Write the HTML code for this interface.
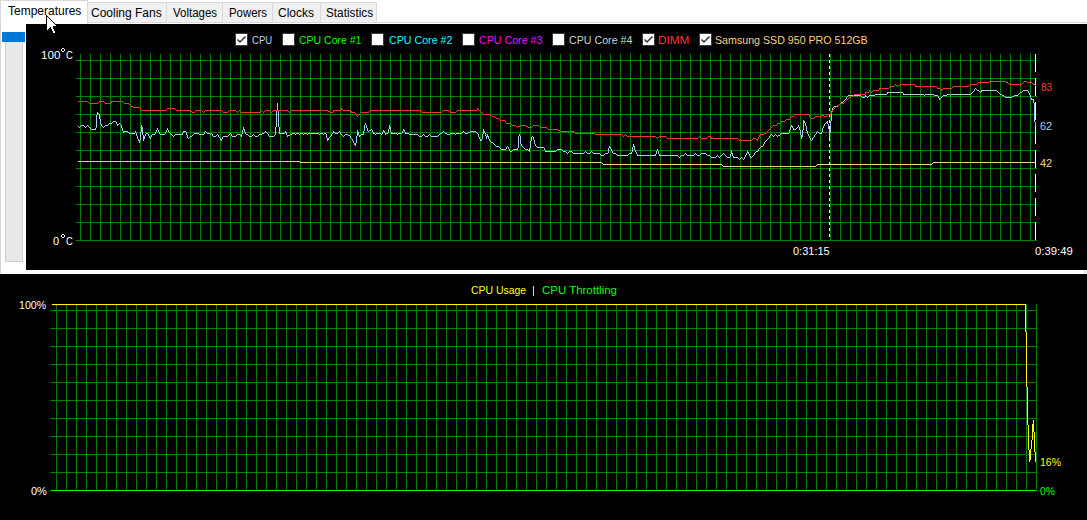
<!DOCTYPE html>
<html><head><meta charset="utf-8">
<style>
html,body{margin:0;padding:0;}
body{width:1087px;height:520px;position:relative;overflow:hidden;background:#fff;font-family:"Liberation Sans",sans-serif;}
.a{position:absolute;white-space:nowrap;line-height:1;}
.tab{position:absolute;top:2px;height:21px;background:#f0f0f0;border:1px solid #d9d9d9;box-sizing:border-box;}
.tt{position:absolute;font-size:12px;color:#000;white-space:nowrap;line-height:1;}
.lg{position:absolute;font-size:11px;white-space:nowrap;line-height:1;top:35px;}
.lab{position:absolute;font-size:11px;white-space:nowrap;line-height:1;color:#fff;}
svg{position:absolute;left:0;top:0;}
</style></head><body>
<div style="position:absolute;left:0;top:0;width:1px;height:274px;background:#d4d4d4"></div>
<div style="position:absolute;left:376px;top:22px;width:711px;height:1px;background:#d9d9d9"></div>
<div class="tab" style="left:87px;width:80px"></div>
<div class="tab" style="left:166px;width:57px"></div>
<div class="tab" style="left:222px;width:51px"></div>
<div class="tab" style="left:272px;width:49px"></div>
<div class="tab" style="left:320px;width:57px"></div>
<div style="position:absolute;left:0;top:0;width:88px;height:24px;background:#fff;border:1px solid #d9d9d9;border-bottom:none;box-sizing:border-box"></div>
<div class="a" style="left:8px;top:5px;font-size:12px;color:#000;">Temperatures</div>
<div class="a" style="left:91px;top:7px;font-size:12px;color:#000;">Cooling Fans</div>
<div class="a" style="left:173px;top:7px;font-size:12px;color:#000;transform:scaleX(0.957);transform-origin:0 0;">Voltages</div>
<div class="a" style="left:229px;top:7px;font-size:12px;color:#000;transform:scaleX(0.949);transform-origin:0 0;">Powers</div>
<div class="a" style="left:278px;top:7px;font-size:12px;color:#000;">Clocks</div>
<div class="a" style="left:326px;top:7px;font-size:12px;color:#000;transform:scaleX(0.979);transform-origin:0 0;">Statistics</div>
<div style="position:absolute;left:2px;top:32px;width:23px;height:10px;background:#0078d7"></div>
<div style="position:absolute;left:5px;top:42px;width:18px;height:220px;background:#e6e8e9;border:1px solid #cfcfcf;border-top:none;box-sizing:border-box"></div>
<div style="position:absolute;left:26px;top:24px;width:1061px;height:246px;background:#000"></div>
<div style="position:absolute;left:0;top:274px;width:1087px;height:246px;background:#000"></div>
<div style="position:absolute;left:1084px;top:270px;width:1px;height:4px;background:#d9d9d9"></div><div style="position:absolute;left:1085px;top:270px;width:2px;height:4px;background:#f0f0f0"></div><div style="position:absolute;left:1084px;top:23px;width:1px;height:1px;background:#d9d9d9"></div>
<svg width="1087" height="520" shape-rendering="crispEdges">
<path d="M80.5 54V241M90.5 54V241M100.5 54V241M110.5 54V241M120.5 54V241M130.5 54V241M140.5 54V241M150.5 54V241M160.5 54V241M170.5 54V241M180.5 54V241M190.5 54V241M200.5 54V241M210.5 54V241M220.5 54V241M230.5 54V241M240.5 54V241M250.5 54V241M260.5 54V241M270.5 54V241M280.5 54V241M290.5 54V241M300.5 54V241M310.5 54V241M320.5 54V241M330.5 54V241M340.5 54V241M350.5 54V241M360.5 54V241M370.5 54V241M380.5 54V241M390.5 54V241M400.5 54V241M410.5 54V241M420.5 54V241M430.5 54V241M440.5 54V241M450.5 54V241M460.5 54V241M470.5 54V241M480.5 54V241M490.5 54V241M500.5 54V241M510.5 54V241M520.5 54V241M530.5 54V241M540.5 54V241M550.5 54V241M560.5 54V241M570.5 54V241M580.5 54V241M590.5 54V241M600.5 54V241M610.5 54V241M620.5 54V241M630.5 54V241M640.5 54V241M650.5 54V241M660.5 54V241M670.5 54V241M680.5 54V241M690.5 54V241M700.5 54V241M710.5 54V241M720.5 54V241M730.5 54V241M740.5 54V241M750.5 54V241M760.5 54V241M770.5 54V241M780.5 54V241M790.5 54V241M800.5 54V241M810.5 54V241M820.5 54V241M830.5 54V241M840.5 54V241M850.5 54V241M860.5 54V241M870.5 54V241M880.5 54V241M890.5 54V241M900.5 54V241M910.5 54V241M920.5 54V241M930.5 54V241M940.5 54V241M950.5 54V241M960.5 54V241M970.5 54V241M980.5 54V241M990.5 54V241M1000.5 54V241M1010.5 54V241M1020.5 54V241M1030.5 54V241M76 60.5H1037M76 78.5H1037M76 96.5H1037M76 114.5H1037M76 132.5H1037M76 150.5H1037M76 168.5H1037M76 186.5H1037M76 204.5H1037M76 222.5H1037M76 240.5H1037" stroke="#008000" stroke-width="1" fill="none"/>
<path d="M56.5 304V491M66.5 304V491M76.5 304V491M86.5 304V491M96.5 304V491M106.5 304V491M116.5 304V491M126.5 304V491M136.5 304V491M146.5 304V491M156.5 304V491M166.5 304V491M176.5 304V491M186.5 304V491M196.5 304V491M206.5 304V491M216.5 304V491M226.5 304V491M236.5 304V491M246.5 304V491M256.5 304V491M266.5 304V491M276.5 304V491M286.5 304V491M296.5 304V491M306.5 304V491M316.5 304V491M326.5 304V491M336.5 304V491M346.5 304V491M356.5 304V491M366.5 304V491M376.5 304V491M386.5 304V491M396.5 304V491M406.5 304V491M416.5 304V491M426.5 304V491M436.5 304V491M446.5 304V491M456.5 304V491M466.5 304V491M476.5 304V491M486.5 304V491M496.5 304V491M506.5 304V491M516.5 304V491M526.5 304V491M536.5 304V491M546.5 304V491M556.5 304V491M566.5 304V491M576.5 304V491M586.5 304V491M596.5 304V491M606.5 304V491M616.5 304V491M626.5 304V491M636.5 304V491M646.5 304V491M656.5 304V491M666.5 304V491M676.5 304V491M686.5 304V491M696.5 304V491M706.5 304V491M716.5 304V491M726.5 304V491M736.5 304V491M746.5 304V491M756.5 304V491M766.5 304V491M776.5 304V491M786.5 304V491M796.5 304V491M806.5 304V491M816.5 304V491M826.5 304V491M836.5 304V491M846.5 304V491M856.5 304V491M866.5 304V491M876.5 304V491M886.5 304V491M896.5 304V491M906.5 304V491M916.5 304V491M926.5 304V491M936.5 304V491M946.5 304V491M956.5 304V491M966.5 304V491M976.5 304V491M986.5 304V491M996.5 304V491M1006.5 304V491M1016.5 304V491M1026.5 304V491M1036.5 304V491M50 310.5H1037M50 328.5H1037M50 346.5H1037M50 364.5H1037M50 382.5H1037M50 400.5H1037M50 418.5H1037M50 436.5H1037M50 454.5H1037M50 472.5H1037" stroke="#008000" stroke-width="1" fill="none"/>
<path d="M829.5 54V240" stroke="#fff" stroke-width="1" stroke-dasharray="3 3"/>
<path d="M1035.5 54V240" stroke="#fff" stroke-width="1" stroke-dasharray="18 6"/>
<path d="M78 161.5h222M300 162.5h302M933 162.5h102M602 163.5h1M932 163.5h1M603 164.5h119M817 164.5h115M722 165.5h1M816 165.5h1M723 166.5h93" stroke="#ffd080" fill="none"/>
<path d="M975 88.5h1M974 89.5h1M976 89.5h1M974 90.5h1M977 90.5h2M981 90.5h16M1023 90.5h5M973 91.5h1M979 91.5h1M981 91.5h1M997 91.5h1M1022 91.5h1M1028 91.5h1M887 92.5h16M972 92.5h1M980 92.5h1M998 92.5h1M1020 92.5h2M1028 92.5h1M887 93.5h1M903 93.5h1M971 93.5h1M999 93.5h1M1019 93.5h1M1029 93.5h1M875 94.5h12M903 94.5h21M925 94.5h9M947 94.5h3M951 94.5h20M1000 94.5h2M1018 94.5h1M1029 94.5h1M848 95.5h13M865 95.5h1M869 95.5h6M924 95.5h1M934 95.5h4M943 95.5h4M950 95.5h1M1002 95.5h2M1014 95.5h4M1030 95.5h1M847 96.5h1M861 96.5h1M865 96.5h2M868 96.5h1M938 96.5h1M942 96.5h1M1004 96.5h1M1012 96.5h2M1030 96.5h1M846 97.5h1M862 97.5h3M867 97.5h1M938 97.5h1M941 97.5h1M1005 97.5h7M1030 97.5h1M846 98.5h1M939 98.5h2M1031 98.5h1M845 99.5h1M939 99.5h1M1031 99.5h3M844 100.5h1M1033 100.5h1M843 101.5h1M1033 101.5h1M841 102.5h2M1033 102.5h1M277 103.5h1M840 103.5h1M1034 103.5h1M277 104.5h1M839 104.5h1M1034 104.5h1M277 105.5h1M838 105.5h1M1034 105.5h1M277 106.5h1M834 106.5h4M1034 106.5h1M277 107.5h1M833 107.5h1M1034 107.5h1M277 108.5h1M832 108.5h1M1034 108.5h1M277 109.5h1M832 109.5h1M1034 109.5h1M276 110.5h1M278 110.5h1M832 110.5h1M1034 110.5h1M276 111.5h1M278 111.5h1M831 111.5h1M1034 111.5h1M97 112.5h1M276 112.5h1M278 112.5h1M831 112.5h1M1034 112.5h1M97 113.5h2M276 113.5h1M278 113.5h1M831 113.5h1M1034 113.5h1M97 114.5h1M99 114.5h1M276 114.5h1M278 114.5h1M831 114.5h1M1034 114.5h1M96 115.5h1M99 115.5h1M276 115.5h1M278 115.5h1M831 115.5h1M1034 115.5h1M96 116.5h1M99 116.5h1M276 116.5h1M278 116.5h1M831 116.5h1M1034 116.5h1M96 117.5h1M99 117.5h1M276 117.5h1M278 117.5h1M831 117.5h1M1034 117.5h1M96 118.5h1M99 118.5h1M276 118.5h1M278 118.5h1M831 118.5h1M1034 118.5h1M96 119.5h1M100 119.5h1M276 119.5h1M278 119.5h1M831 119.5h1M1034 119.5h1M96 120.5h1M100 120.5h1M276 120.5h1M278 120.5h1M803 120.5h1M831 120.5h1M1034 120.5h1M96 121.5h1M100 121.5h1M113 121.5h3M276 121.5h1M278 121.5h1M803 121.5h2M827 121.5h1M830 121.5h1M1034 121.5h1M96 122.5h1M100 122.5h1M112 122.5h1M116 122.5h1M276 122.5h1M278 122.5h1M803 122.5h2M826 122.5h2M830 122.5h1M1035 122.5h1M96 123.5h1M100 123.5h1M109 123.5h3M116 123.5h1M119 123.5h1M276 123.5h1M278 123.5h1M365 123.5h1M803 123.5h1M805 123.5h1M825 123.5h1M827 123.5h1M830 123.5h1M1035 123.5h1M96 124.5h1M101 124.5h1M108 124.5h1M117 124.5h2M120 124.5h1M276 124.5h1M278 124.5h1M365 124.5h1M803 124.5h1M805 124.5h1M824 124.5h1M828 124.5h1M830 124.5h1M1035 124.5h1M81 125.5h3M87 125.5h1M96 125.5h1M101 125.5h1M105 125.5h3M117 125.5h1M121 125.5h1M141 125.5h1M276 125.5h1M278 125.5h1M364 125.5h1M366 125.5h1M389 125.5h1M791 125.5h1M798 125.5h1M803 125.5h1M805 125.5h1M824 125.5h1M828 125.5h1M830 125.5h1M1035 125.5h1M78 126.5h1M80 126.5h1M84 126.5h1M86 126.5h1M88 126.5h1M96 126.5h1M102 126.5h1M104 126.5h1M121 126.5h1M141 126.5h1M276 126.5h1M278 126.5h1M364 126.5h1M366 126.5h1M389 126.5h1M791 126.5h2M798 126.5h1M803 126.5h1M806 126.5h1M823 126.5h1M828 126.5h1M830 126.5h1M1035 126.5h1M79 127.5h1M85 127.5h1M89 127.5h1M96 127.5h1M103 127.5h1M121 127.5h1M141 127.5h2M243 127.5h1M275 127.5h1M279 127.5h1M364 127.5h1M366 127.5h1M389 127.5h2M790 127.5h1M792 127.5h1M797 127.5h1M799 127.5h1M803 127.5h1M806 127.5h1M823 127.5h1M828 127.5h1M830 127.5h1M90 128.5h1M95 128.5h1M122 128.5h1M141 128.5h2M157 128.5h1M167 128.5h1M243 128.5h1M275 128.5h1M279 128.5h1M364 128.5h1M367 128.5h1M389 128.5h2M790 128.5h1M793 128.5h1M796 128.5h1M799 128.5h1M803 128.5h1M806 128.5h1M822 128.5h1M828 128.5h1M830 128.5h1M91 129.5h5M122 129.5h1M141 129.5h2M157 129.5h1M167 129.5h1M243 129.5h2M275 129.5h1M279 129.5h1M364 129.5h1M367 129.5h1M371 129.5h1M388 129.5h1M390 129.5h1M403 129.5h1M483 129.5h1M790 129.5h1M793 129.5h3M799 129.5h1M803 129.5h1M806 129.5h1M822 129.5h1M829 129.5h2M122 130.5h1M141 130.5h2M156 130.5h1M158 130.5h1M166 130.5h1M168 130.5h1M242 130.5h1M244 130.5h1M275 130.5h1M279 130.5h1M357 130.5h1M364 130.5h1M367 130.5h1M369 130.5h2M372 130.5h1M383 130.5h1M388 130.5h1M390 130.5h1M403 130.5h2M483 130.5h1M789 130.5h1M800 130.5h1M802 130.5h1M806 130.5h1M822 130.5h1M829 130.5h2M123 131.5h5M135 131.5h1M141 131.5h2M156 131.5h1M158 131.5h1M166 131.5h1M168 131.5h1M183 131.5h3M205 131.5h1M242 131.5h1M244 131.5h1M265 131.5h1M275 131.5h1M279 131.5h1M285 131.5h1M333 131.5h1M339 131.5h1M357 131.5h1M363 131.5h1M368 131.5h1M372 131.5h1M383 131.5h2M388 131.5h1M390 131.5h1M402 131.5h1M404 131.5h1M443 131.5h1M463 131.5h1M470 131.5h6M483 131.5h2M789 131.5h1M800 131.5h1M802 131.5h1M807 131.5h1M817 131.5h1M822 131.5h1M829 131.5h2M123 132.5h1M128 132.5h1M135 132.5h1M140 132.5h1M142 132.5h1M155 132.5h1M159 132.5h1M165 132.5h1M169 132.5h1M183 132.5h1M186 132.5h1M204 132.5h1M206 132.5h1M242 132.5h1M245 132.5h1M264 132.5h1M266 132.5h1M275 132.5h1M279 132.5h1M285 132.5h2M333 132.5h2M338 132.5h1M340 132.5h1M357 132.5h2M363 132.5h1M373 132.5h1M382 132.5h1M384 132.5h1M388 132.5h1M391 132.5h1M402 132.5h1M405 132.5h1M442 132.5h1M444 132.5h1M462 132.5h1M464 132.5h1M468 132.5h2M476 132.5h1M483 132.5h2M789 132.5h1M800 132.5h1M802 132.5h1M807 132.5h1M816 132.5h1M818 132.5h1M821 132.5h1M829 132.5h2M129 133.5h6M136 133.5h1M140 133.5h1M142 133.5h1M146 133.5h2M155 133.5h1M159 133.5h1M165 133.5h1M170 133.5h1M182 133.5h1M186 133.5h1M194 133.5h5M204 133.5h1M207 133.5h3M211 133.5h1M230 133.5h1M242 133.5h1M245 133.5h1M262 133.5h2M267 133.5h1M275 133.5h1M279 133.5h6M286 133.5h1M292 133.5h3M296 133.5h3M300 133.5h3M304 133.5h3M308 133.5h11M320 133.5h3M324 133.5h2M332 133.5h1M335 133.5h3M340 133.5h1M357 133.5h2M363 133.5h1M373 133.5h2M376 133.5h5M382 133.5h1M385 133.5h3M391 133.5h6M398 133.5h4M405 133.5h4M440 133.5h2M445 133.5h2M450 133.5h5M456 133.5h6M465 133.5h3M477 133.5h1M483 133.5h1M485 133.5h1M781 133.5h8M800 133.5h1M802 133.5h1M807 133.5h1M816 133.5h1M819 133.5h3M829 133.5h1M136 134.5h1M140 134.5h1M142 134.5h1M145 134.5h1M148 134.5h1M152 134.5h3M160 134.5h5M171 134.5h1M175 134.5h8M186 134.5h1M193 134.5h1M199 134.5h5M210 134.5h1M212 134.5h1M217 134.5h1M229 134.5h1M231 134.5h1M237 134.5h3M241 134.5h1M246 134.5h2M253 134.5h1M259 134.5h3M268 134.5h1M275 134.5h1M286 134.5h1M290 134.5h2M295 134.5h1M299 134.5h1M303 134.5h1M307 134.5h1M319 134.5h1M323 134.5h1M326 134.5h1M331 134.5h1M341 134.5h1M345 134.5h3M357 134.5h2M361 134.5h3M375 134.5h1M381 134.5h1M385 134.5h1M397 134.5h1M409 134.5h9M423 134.5h1M429 134.5h1M439 134.5h1M447 134.5h3M455 134.5h1M478 134.5h1M482 134.5h1M485 134.5h1M487 134.5h1M519 134.5h1M771 134.5h1M775 134.5h1M780 134.5h1M800 134.5h1M802 134.5h1M808 134.5h1M815 134.5h1M829 134.5h1M136 135.5h1M140 135.5h1M143 135.5h1M145 135.5h1M148 135.5h1M151 135.5h1M172 135.5h1M174 135.5h1M187 135.5h1M192 135.5h1M212 135.5h1M216 135.5h1M218 135.5h1M228 135.5h1M231 135.5h1M236 135.5h1M240 135.5h2M248 135.5h1M252 135.5h1M254 135.5h1M258 135.5h1M268 135.5h1M274 135.5h1M287 135.5h3M326 135.5h1M331 135.5h1M342 135.5h1M344 135.5h1M348 135.5h2M357 135.5h1M359 135.5h2M418 135.5h1M422 135.5h1M424 135.5h1M428 135.5h1M430 135.5h1M438 135.5h1M478 135.5h1M482 135.5h1M485 135.5h1M487 135.5h1M519 135.5h1M770 135.5h1M772 135.5h1M774 135.5h1M776 135.5h1M778 135.5h2M801 135.5h2M808 135.5h1M814 135.5h1M829 135.5h1M137 136.5h1M140 136.5h1M143 136.5h2M149 136.5h1M151 136.5h1M173 136.5h1M187 136.5h1M190 136.5h2M213 136.5h3M218 136.5h1M223 136.5h5M232 136.5h4M241 136.5h1M249 136.5h3M255 136.5h3M269 136.5h5M287 136.5h1M326 136.5h1M330 136.5h1M343 136.5h1M350 136.5h1M356 136.5h1M359 136.5h1M419 136.5h3M425 136.5h3M431 136.5h7M478 136.5h1M482 136.5h1M486 136.5h3M518 136.5h1M520 136.5h1M532 136.5h1M769 136.5h1M773 136.5h1M777 136.5h1M801 136.5h2M809 136.5h1M814 136.5h1M829 136.5h1M137 137.5h1M140 137.5h1M143 137.5h2M149 137.5h2M187 137.5h1M189 137.5h1M219 137.5h1M222 137.5h1M326 137.5h1M329 137.5h1M350 137.5h1M356 137.5h1M479 137.5h1M482 137.5h1M486 137.5h1M488 137.5h1M518 137.5h1M520 137.5h1M531 137.5h1M533 137.5h1M769 137.5h1M801 137.5h1M809 137.5h1M813 137.5h1M829 137.5h1M137 138.5h1M140 138.5h1M143 138.5h2M150 138.5h1M188 138.5h1M220 138.5h1M222 138.5h1M327 138.5h2M351 138.5h1M356 138.5h1M479 138.5h1M482 138.5h1M486 138.5h1M488 138.5h1M518 138.5h1M520 138.5h1M531 138.5h1M533 138.5h1M768 138.5h1M801 138.5h1M810 138.5h1M812 138.5h1M138 139.5h1M140 139.5h1M143 139.5h1M220 139.5h2M327 139.5h2M352 139.5h1M356 139.5h1M480 139.5h2M489 139.5h1M518 139.5h1M520 139.5h1M531 139.5h1M533 139.5h1M767 139.5h1M810 139.5h1M812 139.5h1M138 140.5h2M143 140.5h1M221 140.5h1M327 140.5h1M352 140.5h1M356 140.5h1M480 140.5h2M489 140.5h1M518 140.5h1M520 140.5h1M531 140.5h1M534 140.5h1M766 140.5h1M811 140.5h1M139 141.5h1M353 141.5h1M356 141.5h1M490 141.5h1M518 141.5h1M520 141.5h1M530 141.5h1M534 141.5h1M765 141.5h1M139 142.5h1M353 142.5h1M356 142.5h1M491 142.5h2M518 142.5h1M520 142.5h1M530 142.5h1M534 142.5h1M764 142.5h1M354 143.5h2M493 143.5h1M518 143.5h1M520 143.5h1M530 143.5h1M534 143.5h1M764 143.5h1M354 144.5h2M494 144.5h1M518 144.5h1M521 144.5h1M530 144.5h1M535 144.5h1M633 144.5h1M763 144.5h1M355 145.5h1M495 145.5h1M518 145.5h1M521 145.5h1M530 145.5h1M535 145.5h1M633 145.5h1M763 145.5h1M496 146.5h3M507 146.5h1M518 146.5h1M522 146.5h1M530 146.5h1M536 146.5h1M609 146.5h1M633 146.5h2M761 146.5h2M499 147.5h1M506 147.5h1M508 147.5h1M518 147.5h1M523 147.5h1M530 147.5h1M537 147.5h7M609 147.5h2M632 147.5h1M634 147.5h1M760 147.5h1M500 148.5h1M506 148.5h1M508 148.5h1M517 148.5h1M524 148.5h1M529 148.5h1M544 148.5h1M608 148.5h1M610 148.5h1M632 148.5h1M634 148.5h1M759 148.5h1M501 149.5h5M509 149.5h1M513 149.5h5M525 149.5h3M529 149.5h1M544 149.5h1M557 149.5h5M608 149.5h1M611 149.5h1M632 149.5h1M634 149.5h1M657 149.5h1M758 149.5h1M509 150.5h1M512 150.5h1M528 150.5h2M545 150.5h1M556 150.5h1M562 150.5h1M608 150.5h1M611 150.5h1M632 150.5h1M635 150.5h1M657 150.5h1M758 150.5h1M510 151.5h2M529 151.5h1M545 151.5h11M563 151.5h3M569 151.5h3M585 151.5h1M591 151.5h1M608 151.5h1M612 151.5h1M632 151.5h1M635 151.5h1M656 151.5h1M658 151.5h1M731 151.5h1M747 151.5h1M756 151.5h2M566 152.5h1M568 152.5h1M572 152.5h1M584 152.5h1M586 152.5h1M590 152.5h1M592 152.5h1M608 152.5h1M612 152.5h1M631 152.5h1M636 152.5h1M656 152.5h1M658 152.5h1M731 152.5h1M747 152.5h2M755 152.5h1M567 153.5h1M573 153.5h11M587 153.5h3M593 153.5h7M605 153.5h3M613 153.5h3M629 153.5h3M636 153.5h1M656 153.5h1M658 153.5h1M685 153.5h1M695 153.5h1M701 153.5h5M723 153.5h1M731 153.5h2M746 153.5h1M748 153.5h1M754 153.5h1M600 154.5h1M604 154.5h1M616 154.5h1M628 154.5h1M637 154.5h1M655 154.5h1M659 154.5h1M684 154.5h1M686 154.5h1M694 154.5h1M696 154.5h1M700 154.5h1M706 154.5h1M722 154.5h1M724 154.5h1M730 154.5h1M732 154.5h1M746 154.5h1M749 154.5h1M754 154.5h1M601 155.5h3M617 155.5h11M637 155.5h19M659 155.5h19M681 155.5h3M687 155.5h7M697 155.5h3M707 155.5h3M717 155.5h1M721 155.5h1M725 155.5h1M730 155.5h1M732 155.5h1M745 155.5h1M749 155.5h1M753 155.5h1M678 156.5h1M680 156.5h1M710 156.5h1M716 156.5h1M718 156.5h1M720 156.5h1M726 156.5h1M730 156.5h1M733 156.5h1M745 156.5h1M750 156.5h1M752 156.5h1M679 157.5h1M711 157.5h5M719 157.5h1M727 157.5h3M733 157.5h5M741 157.5h1M744 157.5h1M750 157.5h2M738 158.5h1M740 158.5h1M742 158.5h1M744 158.5h1M739 159.5h1M743 159.5h1" stroke="#a6caf0" fill="none"/>
<path d="M989 81.5h17M1024 81.5h3M978 82.5h11M1006 82.5h2M1023 82.5h1M1027 82.5h5M977 83.5h1M1008 83.5h1M1022 83.5h1M1032 83.5h1M895 84.5h1M900 84.5h15M970 84.5h7M1009 84.5h13M1033 84.5h2M894 85.5h1M896 85.5h1M898 85.5h2M915 85.5h1M969 85.5h1M1035 85.5h1M890 86.5h4M897 86.5h1M915 86.5h22M953 86.5h16M889 87.5h1M937 87.5h1M952 87.5h1M879 88.5h10M937 88.5h4M943 88.5h9M879 89.5h1M941 89.5h2M869 90.5h1M873 90.5h6M941 90.5h1M869 91.5h2M872 91.5h1M865 92.5h4M871 92.5h1M865 93.5h1M854 94.5h11M853 95.5h1M851 96.5h2M849 97.5h2M848 98.5h1M847 99.5h1M846 100.5h1M78 101.5h10M99 101.5h5M111 101.5h12M845 101.5h1M88 102.5h1M98 102.5h1M104 102.5h1M111 102.5h1M123 102.5h1M844 102.5h1M89 103.5h9M105 103.5h6M124 103.5h5M840 103.5h4M129 104.5h1M839 104.5h1M130 105.5h1M837 105.5h2M131 106.5h2M836 106.5h1M133 107.5h7M835 107.5h1M140 108.5h1M167 108.5h8M341 108.5h1M477 108.5h1M834 108.5h1M140 109.5h1M166 109.5h1M175 109.5h1M341 109.5h2M477 109.5h2M833 109.5h1M141 110.5h25M176 110.5h15M196 110.5h6M205 110.5h17M229 110.5h7M239 110.5h1M261 110.5h1M265 110.5h5M273 110.5h15M291 110.5h37M333 110.5h8M343 110.5h8M370 110.5h51M443 110.5h6M457 110.5h20M479 110.5h1M832 110.5h1M191 111.5h1M195 111.5h1M202 111.5h1M204 111.5h1M222 111.5h1M228 111.5h1M236 111.5h1M238 111.5h1M240 111.5h1M260 111.5h1M262 111.5h1M264 111.5h1M270 111.5h1M272 111.5h1M288 111.5h1M290 111.5h1M328 111.5h2M333 111.5h1M351 111.5h1M369 111.5h1M421 111.5h1M442 111.5h1M449 111.5h1M456 111.5h1M480 111.5h1M832 111.5h1M192 112.5h3M203 112.5h1M223 112.5h5M237 112.5h1M241 112.5h19M263 112.5h1M271 112.5h1M289 112.5h1M330 112.5h3M351 112.5h4M361 112.5h8M422 112.5h20M450 112.5h6M481 112.5h1M831 112.5h1M355 113.5h1M360 113.5h1M482 113.5h1M831 113.5h1M356 114.5h1M359 114.5h1M483 114.5h8M795 114.5h14M821 114.5h1M828 114.5h3M356 115.5h1M358 115.5h1M491 115.5h1M794 115.5h1M809 115.5h1M821 115.5h3M827 115.5h1M357 116.5h1M492 116.5h3M791 116.5h3M809 116.5h1M815 116.5h6M824 116.5h3M495 117.5h1M790 117.5h1M810 117.5h1M814 117.5h1M496 118.5h3M790 118.5h1M811 118.5h3M499 119.5h1M786 119.5h4M500 120.5h5M785 120.5h1M505 121.5h1M781 121.5h4M505 122.5h1M781 122.5h1M506 123.5h5M777 123.5h4M511 124.5h1M777 124.5h1M512 125.5h4M520 125.5h6M533 125.5h6M773 125.5h4M516 126.5h1M518 126.5h2M526 126.5h2M532 126.5h1M539 126.5h1M772 126.5h1M517 127.5h1M528 127.5h4M540 127.5h7M771 127.5h1M547 128.5h1M770 128.5h1M548 129.5h10M769 129.5h1M558 130.5h2M768 130.5h1M560 131.5h14M767 131.5h1M574 132.5h1M766 132.5h1M575 133.5h20M764 133.5h2M595 134.5h27M625 134.5h1M760 134.5h4M622 135.5h1M624 135.5h1M626 135.5h1M759 135.5h1M623 136.5h1M627 136.5h29M659 136.5h7M699 136.5h1M708 136.5h3M759 136.5h1M656 137.5h1M658 137.5h1M666 137.5h1M698 137.5h1M700 137.5h1M707 137.5h1M711 137.5h1M758 137.5h1M657 138.5h1M667 138.5h31M701 138.5h6M711 138.5h27M753 138.5h3M758 138.5h1M738 139.5h1M752 139.5h1M756 139.5h2M739 140.5h13M757 140.5h1" stroke="#ff3434" fill="none"/>
<path d="M51 490.5H1036" stroke="#00ff00" stroke-width="1"/>
<path d="M52 304.5h974M1025 305.5h1M1025 306.5h1M1025 307.5h1M1025 308.5h1M1025 309.5h1M1025 310.5h1M1025 311.5h1M1025 312.5h1M1025 313.5h1M1025 314.5h1M1025 315.5h1M1025 316.5h1M1025 317.5h1M1025 318.5h1M1025 319.5h1M1025 320.5h1M1025 321.5h1M1025 322.5h1M1025 323.5h1M1025 324.5h1M1025 325.5h1M1025 326.5h1M1025 327.5h1M1025 328.5h1M1025 329.5h1M1025 330.5h1M1025 331.5h1M1026 332.5h1M1026 333.5h1M1026 334.5h1M1026 335.5h1M1026 336.5h1M1026 337.5h1M1026 338.5h1M1026 339.5h1M1026 340.5h1M1026 341.5h1M1026 342.5h1M1026 343.5h1M1026 344.5h1M1026 345.5h1M1026 346.5h1M1026 347.5h1M1026 348.5h1M1026 349.5h1M1026 350.5h1M1026 351.5h1M1026 352.5h1M1026 353.5h1M1026 354.5h1M1026 355.5h1M1026 356.5h1M1026 357.5h1M1026 358.5h1M1026 359.5h1M1026 360.5h1M1026 361.5h1M1026 362.5h1M1026 363.5h1M1026 364.5h1M1026 365.5h1M1026 366.5h1M1026 367.5h1M1026 368.5h1M1026 369.5h1M1026 370.5h1M1026 371.5h1M1026 372.5h1M1026 373.5h1M1026 374.5h1M1026 375.5h1M1026 376.5h1M1026 377.5h1M1026 378.5h1M1026 379.5h1M1026 380.5h1M1026 381.5h1M1026 382.5h1M1026 383.5h1M1026 384.5h1M1026 385.5h1M1026 386.5h1M1027 387.5h1M1027 388.5h1M1027 389.5h1M1027 390.5h1M1027 391.5h1M1027 392.5h1M1027 393.5h1M1027 394.5h1M1027 395.5h1M1027 396.5h1M1027 397.5h1M1027 398.5h1M1027 399.5h1M1027 400.5h1M1027 401.5h1M1027 402.5h1M1027 403.5h1M1027 404.5h1M1027 405.5h1M1027 406.5h1M1027 407.5h1M1027 408.5h1M1027 409.5h1M1027 410.5h1M1027 411.5h1M1027 412.5h1M1027 413.5h1M1027 414.5h1M1027 415.5h1M1027 416.5h1M1027 417.5h1M1027 418.5h1M1027 419.5h1M1027 420.5h1M1033 420.5h1M1027 421.5h1M1033 421.5h1M1027 422.5h1M1033 422.5h1M1027 423.5h1M1033 423.5h1M1027 424.5h1M1032 424.5h2M1028 425.5h1M1032 425.5h2M1028 426.5h1M1032 426.5h2M1028 427.5h1M1032 427.5h2M1028 428.5h1M1032 428.5h2M1028 429.5h1M1032 429.5h2M1028 430.5h1M1032 430.5h2M1028 431.5h1M1032 431.5h2M1028 432.5h1M1032 432.5h1M1034 432.5h1M1028 433.5h1M1032 433.5h1M1034 433.5h1M1028 434.5h1M1032 434.5h1M1034 434.5h1M1028 435.5h1M1032 435.5h1M1034 435.5h1M1028 436.5h1M1032 436.5h1M1034 436.5h1M1028 437.5h1M1032 437.5h1M1034 437.5h1M1028 438.5h1M1032 438.5h1M1034 438.5h1M1028 439.5h1M1032 439.5h1M1034 439.5h1M1028 440.5h1M1031 440.5h1M1034 440.5h1M1028 441.5h1M1031 441.5h1M1034 441.5h1M1028 442.5h1M1031 442.5h1M1034 442.5h1M1028 443.5h1M1031 443.5h1M1034 443.5h1M1028 444.5h1M1031 444.5h1M1034 444.5h1M1028 445.5h1M1031 445.5h1M1034 445.5h1M1028 446.5h1M1031 446.5h1M1034 446.5h1M1028 447.5h1M1031 447.5h1M1034 447.5h1M1028 448.5h1M1031 448.5h1M1034 448.5h1M1028 449.5h1M1030 449.5h1M1034 449.5h1M1029 450.5h2M1034 450.5h1M1029 451.5h2M1034 451.5h1M1029 452.5h2M1035 452.5h1M1029 453.5h2M1035 453.5h1M1029 454.5h2M1035 454.5h1M1029 455.5h2M1035 455.5h1M1029 456.5h2M1035 456.5h1M1029 457.5h2M1035 457.5h1M1029 458.5h2M1035 458.5h1M1029 459.5h2M1035 459.5h1M1029 460.5h1M1035 460.5h1M1029 461.5h1M1035 461.5h1" stroke="#ffff00" fill="none"/>
<path d="M62 48.5h2M61.5 49v2M64.5 49v2M62 51.5h2" stroke="#fff" fill="none"/><path d="M62 234.5h2M61.5 235v2M64.5 235v2M62 237.5h2" stroke="#fff" fill="none"/><rect x="236" y="34" width="11" height="11" fill="#fff"/><rect x="235.5" y="33.5" width="12" height="12" fill="none" stroke="#3a3a3a"/><path d="M237.5 39.5L240 42L245.5 36.5" fill="none" stroke="#333" stroke-width="1.5" shape-rendering="geometricPrecision"/><rect x="283" y="34" width="11" height="11" fill="#fff"/><rect x="282.5" y="33.5" width="12" height="12" fill="none" stroke="#3a3a3a"/><rect x="372" y="34" width="11" height="11" fill="#fff"/><rect x="371.5" y="33.5" width="12" height="12" fill="none" stroke="#3a3a3a"/><rect x="463" y="34" width="11" height="11" fill="#fff"/><rect x="462.5" y="33.5" width="12" height="12" fill="none" stroke="#3a3a3a"/><rect x="553" y="34" width="11" height="11" fill="#fff"/><rect x="552.5" y="33.5" width="12" height="12" fill="none" stroke="#3a3a3a"/><rect x="643" y="34" width="11" height="11" fill="#fff"/><rect x="642.5" y="33.5" width="12" height="12" fill="none" stroke="#3a3a3a"/><path d="M644.5 39.5L647 42L652.5 36.5" fill="none" stroke="#333" stroke-width="1.5" shape-rendering="geometricPrecision"/><rect x="700" y="34" width="11" height="11" fill="#fff"/><rect x="699.5" y="33.5" width="12" height="12" fill="none" stroke="#3a3a3a"/><path d="M701.5 39.5L704 42L709.5 36.5" fill="none" stroke="#333" stroke-width="1.5" shape-rendering="geometricPrecision"/>
</svg>
<div class="a" style="left:252px;top:35px;font-size:11px;color:#b4d2f6;transform:scaleX(0.87);transform-origin:0 0;">CPU</div>
<div class="a" style="left:299px;top:35px;font-size:11px;color:#00ff00;transform:scaleX(0.954);transform-origin:0 0;">CPU Core #1</div>
<div class="a" style="left:389px;top:35px;font-size:11px;color:#00ffff;transform:scaleX(0.969);transform-origin:0 0;">CPU Core #2</div>
<div class="a" style="left:479px;top:35px;font-size:11px;color:#ff00ff;transform:scaleX(0.969);transform-origin:0 0;">CPU Core #3</div>
<div class="a" style="left:569px;top:35px;font-size:11px;color:#c0dcc0;transform:scaleX(0.969);transform-origin:0 0;">CPU Core #4</div>
<div class="a" style="left:658px;top:35px;font-size:11px;color:#ff3434;transform:scaleX(1.071);transform-origin:0 0;">DIMM</div>
<div class="a" style="left:715px;top:35px;font-size:11px;color:#ffd080;transform:scaleX(0.968);transform-origin:0 0;">Samsung SSD 950 PRO 512GB</div>
<div class="a" style="left:41px;top:50px;font-size:11px;color:#fff;transform:scaleX(1.059);transform-origin:0 0;">100</div>
<div class="a" style="left:66px;top:50px;font-size:11px;color:#fff;transform:scaleX(0.857);transform-origin:0 0;">C</div>
<div class="a" style="left:53px;top:236px;font-size:11px;color:#fff;">0</div>
<div class="a" style="left:66px;top:236px;font-size:11px;color:#fff;transform:scaleX(0.857);transform-origin:0 0;">C</div>
<div class="a" style="left:793px;top:246px;font-size:11px;color:#fff;">0:31:15</div>
<div class="a" style="left:1035px;top:246px;font-size:11px;color:#fff;transform:scaleX(1.028);transform-origin:0 0;">0:39:49</div>
<div class="a" style="left:1041px;top:82px;font-size:11px;color:#ff3434;transform:scaleX(0.917);transform-origin:0 0;">83</div>
<div class="a" style="left:1040px;top:121px;font-size:11px;color:#a6caf0;">62</div>
<div class="a" style="left:1040px;top:158px;font-size:11px;color:#ffd080;">42</div>
<div class="a" style="left:19px;top:300px;font-size:11px;color:#fff;transform:scaleX(0.963);transform-origin:0 0;">100%</div>
<div class="a" style="left:31px;top:486px;font-size:11px;color:#fff;">0%</div>
<div class="a" style="left:1040px;top:457px;font-size:11px;color:#ffff00;transform:scaleX(0.952);transform-origin:0 0;">16%</div>
<div class="a" style="left:1040px;top:486px;font-size:11px;color:#00ff00;transform:scaleX(0.938);transform-origin:0 0;">0%</div>
<div class="a" style="left:471px;top:285px;font-size:11px;color:#ffff00;transform:scaleX(0.948);transform-origin:0 0;">CPU Usage</div>
<div class="a" style="left:542px;top:285px;font-size:11px;color:#00ff00;transform:scaleX(1.042);transform-origin:0 0;">CPU Throttling</div><div style="position:absolute;left:533px;top:286px;width:1px;height:10px;background:#c8d0ff"></div>
<svg width="1087" height="520" shape-rendering="crispEdges" style="position:absolute;left:0;top:0"><rect x="46" y="15" width="1" height="1" fill="#000"/><rect x="46" y="16" width="1" height="1" fill="#000"/><rect x="47" y="16" width="1" height="1" fill="#000"/><rect x="46" y="17" width="1" height="1" fill="#000"/><rect x="47" y="17" width="1" height="1" fill="#fff"/><rect x="48" y="17" width="1" height="1" fill="#000"/><rect x="46" y="18" width="1" height="1" fill="#000"/><rect x="47" y="18" width="1" height="1" fill="#fff"/><rect x="48" y="18" width="1" height="1" fill="#fff"/><rect x="49" y="18" width="1" height="1" fill="#000"/><rect x="46" y="19" width="1" height="1" fill="#000"/><rect x="47" y="19" width="1" height="1" fill="#fff"/><rect x="48" y="19" width="1" height="1" fill="#fff"/><rect x="49" y="19" width="1" height="1" fill="#fff"/><rect x="50" y="19" width="1" height="1" fill="#000"/><rect x="46" y="20" width="1" height="1" fill="#000"/><rect x="47" y="20" width="1" height="1" fill="#fff"/><rect x="48" y="20" width="1" height="1" fill="#fff"/><rect x="49" y="20" width="1" height="1" fill="#fff"/><rect x="50" y="20" width="1" height="1" fill="#fff"/><rect x="51" y="20" width="1" height="1" fill="#000"/><rect x="46" y="21" width="1" height="1" fill="#000"/><rect x="47" y="21" width="1" height="1" fill="#fff"/><rect x="48" y="21" width="1" height="1" fill="#fff"/><rect x="49" y="21" width="1" height="1" fill="#fff"/><rect x="50" y="21" width="1" height="1" fill="#fff"/><rect x="51" y="21" width="1" height="1" fill="#fff"/><rect x="52" y="21" width="1" height="1" fill="#000"/><rect x="46" y="22" width="1" height="1" fill="#000"/><rect x="47" y="22" width="1" height="1" fill="#fff"/><rect x="48" y="22" width="1" height="1" fill="#fff"/><rect x="49" y="22" width="1" height="1" fill="#fff"/><rect x="50" y="22" width="1" height="1" fill="#fff"/><rect x="51" y="22" width="1" height="1" fill="#fff"/><rect x="52" y="22" width="1" height="1" fill="#fff"/><rect x="53" y="22" width="1" height="1" fill="#000"/><rect x="46" y="23" width="1" height="1" fill="#000"/><rect x="47" y="23" width="1" height="1" fill="#fff"/><rect x="48" y="23" width="1" height="1" fill="#fff"/><rect x="49" y="23" width="1" height="1" fill="#fff"/><rect x="50" y="23" width="1" height="1" fill="#fff"/><rect x="51" y="23" width="1" height="1" fill="#fff"/><rect x="52" y="23" width="1" height="1" fill="#fff"/><rect x="53" y="23" width="1" height="1" fill="#fff"/><rect x="54" y="23" width="1" height="1" fill="#000"/><rect x="46" y="24" width="1" height="1" fill="#000"/><rect x="47" y="24" width="1" height="1" fill="#fff"/><rect x="48" y="24" width="1" height="1" fill="#fff"/><rect x="49" y="24" width="1" height="1" fill="#fff"/><rect x="50" y="24" width="1" height="1" fill="#fff"/><rect x="51" y="24" width="1" height="1" fill="#fff"/><rect x="52" y="24" width="1" height="1" fill="#fff"/><rect x="53" y="24" width="1" height="1" fill="#fff"/><rect x="54" y="24" width="1" height="1" fill="#fff"/><rect x="55" y="24" width="1" height="1" fill="#000"/><rect x="46" y="25" width="1" height="1" fill="#000"/><rect x="47" y="25" width="1" height="1" fill="#fff"/><rect x="48" y="25" width="1" height="1" fill="#fff"/><rect x="49" y="25" width="1" height="1" fill="#fff"/><rect x="50" y="25" width="1" height="1" fill="#fff"/><rect x="51" y="25" width="1" height="1" fill="#fff"/><rect x="52" y="25" width="1" height="1" fill="#fff"/><rect x="53" y="25" width="1" height="1" fill="#fff"/><rect x="54" y="25" width="1" height="1" fill="#fff"/><rect x="55" y="25" width="1" height="1" fill="#fff"/><rect x="56" y="25" width="1" height="1" fill="#000"/><rect x="46" y="26" width="1" height="1" fill="#000"/><rect x="47" y="26" width="1" height="1" fill="#fff"/><rect x="48" y="26" width="1" height="1" fill="#fff"/><rect x="49" y="26" width="1" height="1" fill="#fff"/><rect x="50" y="26" width="1" height="1" fill="#fff"/><rect x="51" y="26" width="1" height="1" fill="#fff"/><rect x="52" y="26" width="1" height="1" fill="#fff"/><rect x="53" y="26" width="1" height="1" fill="#000"/><rect x="54" y="26" width="1" height="1" fill="#000"/><rect x="55" y="26" width="1" height="1" fill="#000"/><rect x="56" y="26" width="1" height="1" fill="#000"/><rect x="57" y="26" width="1" height="1" fill="#000"/><rect x="46" y="27" width="1" height="1" fill="#000"/><rect x="47" y="27" width="1" height="1" fill="#fff"/><rect x="48" y="27" width="1" height="1" fill="#fff"/><rect x="49" y="27" width="1" height="1" fill="#fff"/><rect x="50" y="27" width="1" height="1" fill="#000"/><rect x="51" y="27" width="1" height="1" fill="#fff"/><rect x="52" y="27" width="1" height="1" fill="#fff"/><rect x="53" y="27" width="1" height="1" fill="#000"/><rect x="46" y="28" width="1" height="1" fill="#000"/><rect x="47" y="28" width="1" height="1" fill="#fff"/><rect x="48" y="28" width="1" height="1" fill="#fff"/><rect x="49" y="28" width="1" height="1" fill="#000"/><rect x="50" y="28" width="1" height="1" fill="#000"/><rect x="51" y="28" width="1" height="1" fill="#fff"/><rect x="52" y="28" width="1" height="1" fill="#fff"/><rect x="53" y="28" width="1" height="1" fill="#000"/><rect x="46" y="29" width="1" height="1" fill="#000"/><rect x="47" y="29" width="1" height="1" fill="#fff"/><rect x="48" y="29" width="1" height="1" fill="#000"/><rect x="51" y="29" width="1" height="1" fill="#000"/><rect x="52" y="29" width="1" height="1" fill="#fff"/><rect x="53" y="29" width="1" height="1" fill="#fff"/><rect x="54" y="29" width="1" height="1" fill="#000"/><rect x="46" y="30" width="1" height="1" fill="#000"/><rect x="47" y="30" width="1" height="1" fill="#000"/><rect x="51" y="30" width="1" height="1" fill="#000"/><rect x="52" y="30" width="1" height="1" fill="#fff"/><rect x="53" y="30" width="1" height="1" fill="#fff"/><rect x="54" y="30" width="1" height="1" fill="#000"/><rect x="46" y="31" width="1" height="1" fill="#000"/><rect x="52" y="31" width="1" height="1" fill="#000"/><rect x="53" y="31" width="1" height="1" fill="#fff"/><rect x="54" y="31" width="1" height="1" fill="#fff"/><rect x="55" y="31" width="1" height="1" fill="#000"/><rect x="52" y="32" width="1" height="1" fill="#000"/><rect x="53" y="32" width="1" height="1" fill="#fff"/><rect x="54" y="32" width="1" height="1" fill="#fff"/><rect x="55" y="32" width="1" height="1" fill="#000"/><rect x="53" y="33" width="1" height="1" fill="#000"/><rect x="54" y="33" width="1" height="1" fill="#000"/></svg>
</body></html>
